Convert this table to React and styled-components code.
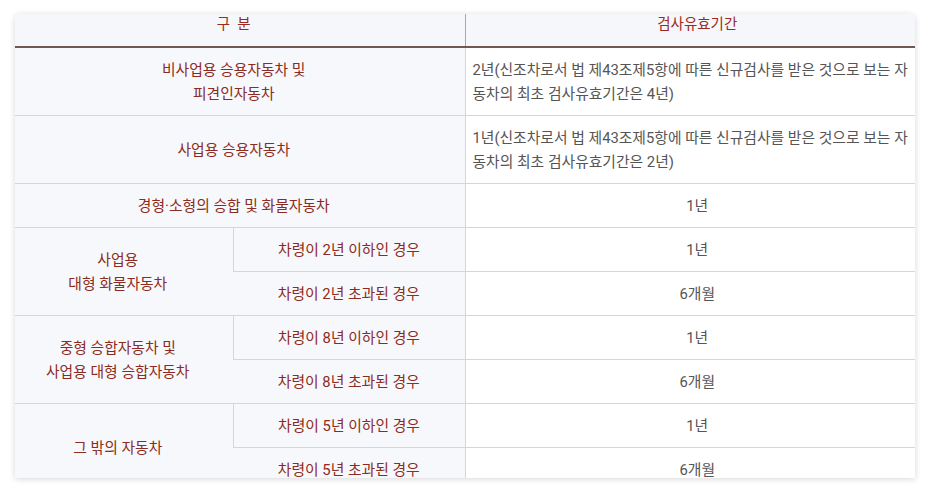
import React from "react";
import styled, { createGlobalStyle } from "styled-components";

const GlobalStyle = createGlobalStyle`
  body {
    margin: 0;
    background: #ffffff;
    font-family: Roboto, "Noto Sans CJK KR", "Noto Sans", sans-serif;
  }
`;

const Page = styled.div`
  padding: 14px 15px;
`;

const Card = styled.div`
  width: 900px;
  height: 464px;
  overflow: hidden;
  border-radius: 5px 5px 0 0;
  box-shadow: 0 1px 6px rgba(0, 0, 0, 0.16);
  background: #ffffff;
`;

const Table = styled.table`
  width: 900px;
  border-collapse: collapse;
  table-layout: fixed;
  font-size: 14.8px;
  line-height: 24px;
`;

const HeadCell = styled.th`
  height: 22px;
  padding: 0 ${(p) => (p.$first ? "12px" : "0")} 10px ${(p) => (p.$first ? "0" : "14px")};
  font-weight: 400;
  font-size: 14.5px;
  line-height: 22px;
  vertical-align: top;
  color: #9a2a20;
  background: #f6f7fb;
  border-bottom: 2px solid #6e5a52;
  & + & {
    border-left: 1px solid #a8a8a8;
  }
`;

const Cell = styled.td`
  padding: 10px 0 9px;
  text-align: center;
  border-bottom: 1px solid #d6d6d9;
  border-left: 1px solid #d6d6d9;
  &:first-child {
    border-left: none;
  }
`;

const LabelCell = styled(Cell)`
  color: #8c2b20;
  background: #f7f8fc;
  padding-right: ${(p) => (p.$group ? "12px" : "0")};
`;

const ValueCell = styled(Cell)`
  color: #555555;
  background: #ffffff;
  text-align: ${(p) => (p.$left ? "left" : "center")};
  padding-left: ${(p) => (p.$left ? "7px" : "14px")};
  padding-right: ${(p) => (p.$left ? "2px" : "0")};
`;

const groups = [
  {
    label: ["사업용", "대형 화물자동차"],
    rows: [
      ["차령이 2년 이하인 경우", "1년"],
      ["차령이 2년 초과된 경우", "6개월"],
    ],
  },
  {
    label: ["중형 승합자동차 및", "사업용 대형 승합자동차"],
    rows: [
      ["차령이 8년 이하인 경우", "1년"],
      ["차령이 8년 초과된 경우", "6개월"],
    ],
  },
  {
    label: ["그 밖의 자동차"],
    rows: [
      ["차령이 5년 이하인 경우", "1년"],
      ["차령이 5년 초과된 경우", "6개월"],
    ],
  },
];

export default function App() {
  return (
    <Page>
      <GlobalStyle />
      <Card>
        <Table>
          <colgroup>
            <col style={{ width: 218 }} />
            <col style={{ width: 232 }} />
            <col style={{ width: 450 }} />
          </colgroup>
          <thead>
            <tr>
              <HeadCell colSpan={2} $first>
                구&nbsp;&nbsp;분
              </HeadCell>
              <HeadCell>검사유효기간</HeadCell>
            </tr>
          </thead>
          <tbody>
            <tr>
              <LabelCell colSpan={2} $group>
                비사업용 승용자동차 및
                <br />
                피견인자동차
              </LabelCell>
              <ValueCell $left>
                2년(신조차로서 법 제43조제5항에 따른 신규검사를 받은 것으로 보는 자동차의 최초 검사유효기간은 4년)
              </ValueCell>
            </tr>
            <tr>
              <LabelCell colSpan={2} $group>
                사업용 승용자동차
              </LabelCell>
              <ValueCell $left>
                1년(신조차로서 법 제43조제5항에 따른 신규검사를 받은 것으로 보는 자동차의 최초 검사유효기간은 2년)
              </ValueCell>
            </tr>
            <tr>
              <LabelCell colSpan={2} $group>
                경형·소형의 승합 및 화물자동차
              </LabelCell>
              <ValueCell>1년</ValueCell>
            </tr>
            {groups.map((g) =>
              g.rows.map((r, i) => (
                <tr key={g.label.join() + i}>
                  {i === 0 && (
                    <LabelCell rowSpan={g.rows.length} $group>
                      {g.label.map((l, j) => (
                        <React.Fragment key={l}>
                          {j > 0 && <br />}
                          {l}
                        </React.Fragment>
                      ))}
                    </LabelCell>
                  )}
                  <LabelCell>{r[0]}</LabelCell>
                  <ValueCell>{r[1]}</ValueCell>
                </tr>
              ))
            )}
          </tbody>
        </Table>
      </Card>
    </Page>
  );
}
